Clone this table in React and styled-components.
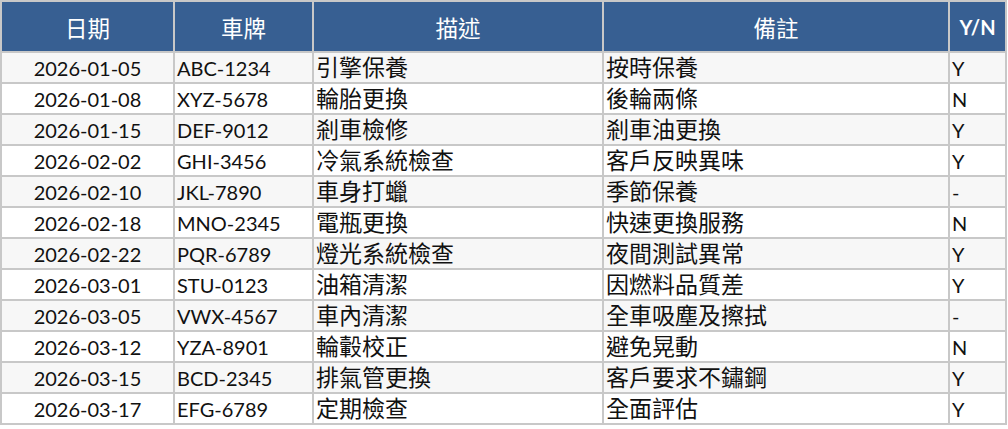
import React from "react";
import styled, { createGlobalStyle } from "styled-components";

const Global = createGlobalStyle`
  html, body { margin: 0; padding: 0; background: #ffffff; }
  body { font-family: "Lato", "Noto Sans CJK TC", sans-serif; }
`;

const Table = styled.table`
  border-collapse: separate;
  border-spacing: 2px;
  background: #c8c8c8;
  table-layout: fixed;
  width: 1007px;
  font-family: "Lato", "Noto Sans CJK TC", sans-serif;
  color: #111;
`;

const HeadCell = styled.th`
  height: 49px;
  padding: 0;
  background: #375f92;
  color: #ffffff;
  text-align: center;
  vertical-align: middle;
  font-size: ${(p) => (p.$latin ? "20px" : "22.5px")};
  font-weight: ${(p) => (p.$latin ? 700 : 400)};
  box-sizing: border-box;
`;

const Row = styled.tr`
  background: ${(p) => (p.$odd ? "#f7f7f7" : "#ffffff")};
`;

const Cell = styled.td`
  height: 29px;
  padding: 0 0 0 ${(p) => (p.$center ? "0" : "2px")};
  box-sizing: border-box;
  text-align: ${(p) => (p.$center ? "center" : "left")};
  vertical-align: middle;
  font-size: ${(p) => (p.$cjk ? "23px" : "20px")};
  line-height: 1;
  white-space: nowrap;
  overflow: hidden;
`;

const rows = [
  ["2026-01-05", "ABC-1234", "引擎保養", "按時保養", "Y"],
  ["2026-01-08", "XYZ-5678", "輪胎更換", "後輪兩條", "N"],
  ["2026-01-15", "DEF-9012", "剎車檢修", "剎車油更換", "Y"],
  ["2026-02-02", "GHI-3456", "冷氣系統檢查", "客戶反映異味", "Y"],
  ["2026-02-10", "JKL-7890", "車身打蠟", "季節保養", "-"],
  ["2026-02-18", "MNO-2345", "電瓶更換", "快速更換服務", "N"],
  ["2026-02-22", "PQR-6789", "燈光系統檢查", "夜間測試異常", "Y"],
  ["2026-03-01", "STU-0123", "油箱清潔", "因燃料品質差", "Y"],
  ["2026-03-05", "VWX-4567", "車內清潔", "全車吸塵及擦拭", "-"],
  ["2026-03-12", "YZA-8901", "輪轂校正", "避免晃動", "N"],
  ["2026-03-15", "BCD-2345", "排氣管更換", "客戶要求不鏽鋼", "Y"],
  ["2026-03-17", "EFG-6789", "定期檢查", "全面評估", "Y"],
];

export default function App() {
  return (
    <>
      <Global />
      <Table>
        <colgroup>
          <col style={{ width: 171 }} />
          <col style={{ width: 137 }} />
          <col style={{ width: 288 }} />
          <col style={{ width: 344 }} />
          <col style={{ width: 55 }} />
        </colgroup>
        <thead>
          <tr>
            <HeadCell>日期</HeadCell>
            <HeadCell>車牌</HeadCell>
            <HeadCell>描述</HeadCell>
            <HeadCell>備註</HeadCell>
            <HeadCell $latin>Y/N</HeadCell>
          </tr>
        </thead>
        <tbody>
          {rows.map((r, i) => (
            <Row key={i} $odd={i % 2 === 0}>
              <Cell $center>{r[0]}</Cell>
              <Cell>{r[1]}</Cell>
              <Cell $cjk>{r[2]}</Cell>
              <Cell $cjk>{r[3]}</Cell>
              <Cell>{r[4]}</Cell>
            </Row>
          ))}
        </tbody>
      </Table>
    </>
  );
}
